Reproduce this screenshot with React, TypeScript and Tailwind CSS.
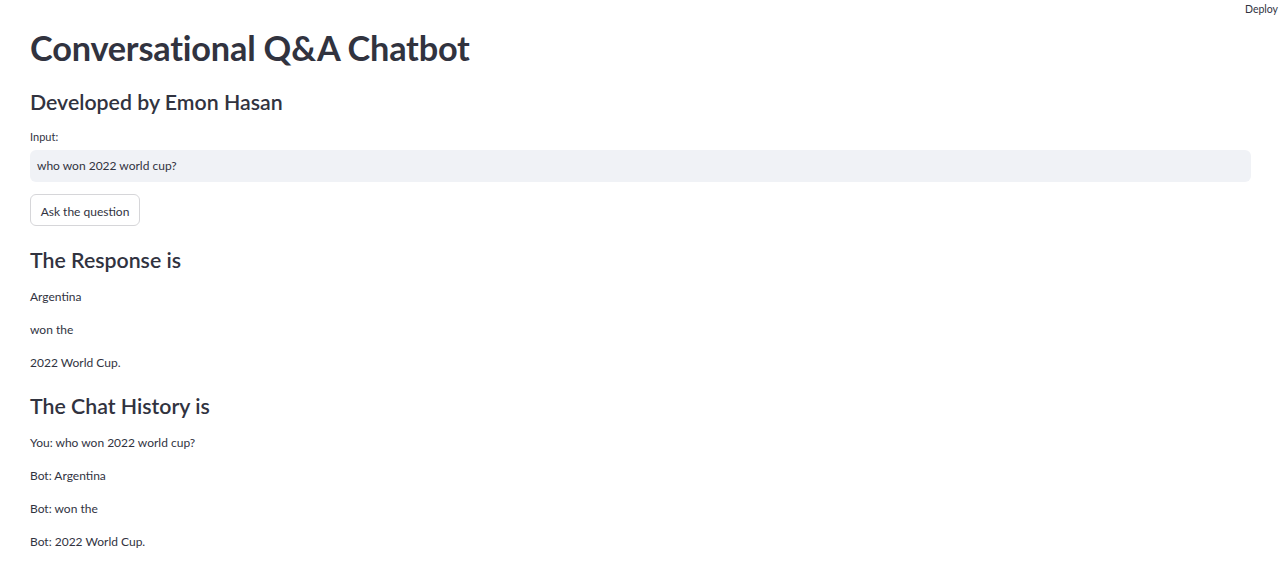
import React from 'react';

const font = { fontFamily: 'Lato, "Noto Sans", sans-serif' };

const response = ['Argentina', 'won the', '2022 World Cup.'];
const history = ['You: who won 2022 world cup?', 'Bot: Argentina', 'Bot: won the', 'Bot: 2022 World Cup.'];

export default function App() {
    return (
        <div className="relative min-h-screen bg-white text-[#31333f]" style={font}>
            {/* streamlit header overlay */}
            <div className="absolute top-0 right-0 pt-[1px] pr-[3px] text-[10.5px] leading-[16px] text-[#31333f]">Deploy</div>

            <main className="flex flex-col px-[30px] pt-[27px]">
                <h1 className="text-[34.3px] leading-[42px] font-bold tracking-[-0.2px]">Conversational Q&amp;A Chatbot</h1>
                <h2 className="mt-[20px] text-[21.3px] leading-[26px] font-semibold">Developed by Emon Hasan</h2>

                <label className="mt-[14px] text-[11px] leading-[16px]">Input:</label>
                <div className="mt-[5px] flex h-[32px] items-center rounded-[6px] bg-[#f0f2f6] px-[7px] text-[12px]">
                    who won 2022 world cup?
                </div>

                <div className="mt-[12px]">
                    <button
                        type="button"
                        className="h-[32px] w-[110px] rounded-[6px] border border-[#d6d6d9] bg-white pt-[3px] text-[12px] leading-none text-[#31333f]"
                    >
                        Ask the question
                    </button>
                </div>

                <h3 className="mt-[21px] text-[21.3px] leading-[26px] font-semibold">The Response is</h3>
                <div className="mt-[14px] flex flex-col gap-[13px]">
                    {response.map((line) => (
                        <p key={line} className="text-[12px] leading-[20px]">{line}</p>
                    ))}
                </div>

                <h3 className="mt-[20px] text-[21.3px] leading-[26px] font-semibold">The Chat History is</h3>
                <div className="mt-[14px] flex flex-col gap-[13px]">
                    {history.map((line) => (
                        <p key={line} className="text-[12px] leading-[20px]">{line}</p>
                    ))}
                </div>
            </main>
        </div>
    );
}
